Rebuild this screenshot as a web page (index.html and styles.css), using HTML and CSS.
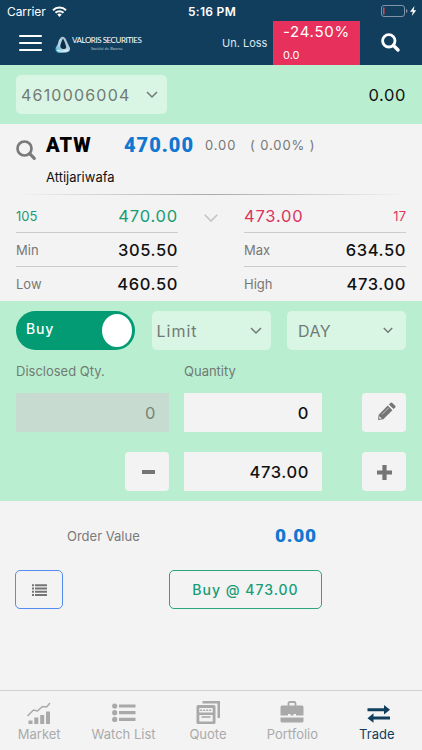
FILE: index.html
```html
<!DOCTYPE html>
<html lang="en">
<head>
    <meta charset="UTF-8">
    <meta name="viewport" content="width=device-width, initial-scale=1.0">
    <title>Trade</title>
    <link rel="stylesheet" href="styles.css">
</head>
<body>
    <div class="statusbar">
        <div class="carrier">
            <span>Carrier</span>
            <svg width="15" height="11" viewBox="0 0 15 11"><g fill="none" stroke="#fff" stroke-width="2"><path d="M1 4.2a9.3 9.3 0 0 1 13 0"/><path d="M3.5 6.8a5.7 5.7 0 0 1 8 0"/></g><path d="M5.3 8.6a3.2 3.2 0 0 1 4.4 0L7.5 11z" fill="#fff"/></svg>
        </div>
        <span class="time">5:16 PM</span>
        <div class="battery">
            <svg width="36" height="12" viewBox="0 0 36 12"><rect x=".5" y=".5" width="23" height="11" rx="2.5" fill="none" stroke="#8295a8"/><path d="M2 2.500h1.500v7H2z" fill="#f0444a"/><path d="M25 4v4q1.500-.5 1.500-2T25 4z" fill="#8295a8"/><path d="M33.500 1L29 6.800h2.800L30.800 11l4.500-5.800h-2.700z" fill="#fff"/></svg>
        </div>
    </div>

    <div class="header">
        <div class="menu"><i></i><i></i><i></i></div>
        <div class="logo">
            <svg width="16" height="18" viewBox="0 0 16 18">
                <defs>
                    <linearGradient id="drop" x1="0" y1="1" x2="1" y2="0"><stop offset="0" stop-color="#2ba3c8"/><stop offset=".4" stop-color="#b9dbe8"/><stop offset="1" stop-color="#a9b5bf"/></linearGradient>
                </defs>
                <path d="M5.500 2Q8-.5 10.500 2.500Q12 6 15 12Q15.500 16 11 16.500L4 17Q-.5 16 .8 11.500Q3.500 8 3.800 4.500Q4.200 3 5.500 2z" fill="url(#drop)"/>
                <path d="M8 2.500Q10 6 11 10Q12 13.500 8 13Q4.500 12.500 5.500 8.500Q6.500 5 8 2.500z" fill="#0b2d49"/>
                <path d="M2 14Q6 16.500 13.500 14" fill="none" stroke="#eef6fa" stroke-width="1.200"/>
            </svg>
            <div class="brand">
                <span class="brand-name">VALORIS SECURITIES</span>
                <span class="brand-sub">Société de Bourse</span>
            </div>
        </div>
        <span class="unloss">Un. Loss</span>
        <div class="loss">
            <span class="loss-pct">-24.50%</span>
            <span class="loss-val">0.0</span>
        </div>
        <svg class="search" width="20" height="20" viewBox="0 0 20 20" fill="none" stroke="#fff"><circle cx="7.800" cy="7.800" r="6.200" stroke-width="2.800"/><path d="M12.500 12.500l4.500 4.500" stroke-width="3.400" stroke-linecap="round"/></svg>
    </div>

    <div class="account">
        <div class="select account-no">
            <span>4610006004</span>
            <svg width="12" height="8" viewBox="0 0 12 8"><path d="M1 1l5 5 5-5"/></svg>
        </div>
        <span class="balance">0.00</span>
    </div>

    <div class="quote">
        <div class="symbol">
            <svg width="21" height="21" viewBox="0 0 21 21" fill="none" stroke="#7a7a7a"><circle cx="8.500" cy="8.500" r="7" stroke-width="2.700"/><path d="M13.700 13.700l4.600 4.600" stroke-width="3.200" stroke-linecap="round"/></svg>
            <span class="ticker">ATW</span>
            <span class="last">470.00</span>
            <span class="change">0.00</span>
            <span class="change-pct">( 0.00% )</span>
        </div>
        <div class="company">Attijariwafa</div>
        <div class="divider"></div>
        <div class="depth">
            <div class="side">
                <div class="row bid"><span>105</span><b>470.00</b></div>
                <div class="row"><span>Min</span><b>305.50</b></div>
                <div class="row"><span>Low</span><b>460.50</b></div>
            </div>
            <svg class="expand" width="14" height="8" viewBox="0 0 14 8"><path d="M.7.8L7 7 13.300.8" fill="none" stroke="#c3c3c3" stroke-width="1.600"/></svg>
            <div class="side">
                <div class="row ask"><b>473.00</b><span>17</span></div>
                <div class="row"><span>Max</span><b>634.50</b></div>
                <div class="row"><span>High</span><b>473.00</b></div>
            </div>
        </div>
    </div>

    <div class="order">
        <div class="options">
            <div class="toggle"><span>Buy</span><i></i></div>
            <div class="select limit">
                <span>Limit</span>
                <svg width="12" height="8" viewBox="0 0 12 8"><path d="M1 1l5 5 5-5"/></svg>
            </div>
            <div class="select day">
                <span>DAY</span>
                <svg width="10" height="7" viewBox="0 0 10 7"><path d="M.8 1L5 5.200 9.200 1"/></svg>
            </div>
        </div>
        <div class="labels"><span>Disclosed Qty.</span><span>Quantity</span></div>
        <div class="fields">
            <div class="field disabled">0</div>
            <div class="field">0</div>
            <div class="btn edit">
                <svg width="19" height="19" viewBox="0 0 19 19" fill="#757575"><path d="M1 18l.7-5.300L10.800 3.600l4.600 4.600L6.300 17.300z"/><path d="M11.900 2.500L13.700.8q.8-.6 1.600.1l2.900 2.900q.7.8 0 1.600l-1.700 1.700z"/><path d="M5 12.500l6.700-6.700" stroke="#f3f3f3" stroke-width=".6"/><path d="M2.500 14.300l2.200 2.200-2.100.3-.5-.5z" fill="#f3f3f3"/></svg>
            </div>
            <div class="btn minus">
                <svg width="13" height="4" viewBox="0 0 13 4"><rect width="13" height="4" fill="#757575"/></svg>
            </div>
            <div class="field">473.00</div>
            <div class="btn plus">
                <svg width="15" height="15" viewBox="0 0 15 15"><path d="M7.500 0v15M0 7.500h15" stroke="#757575" stroke-width="4.200"/></svg>
            </div>
        </div>
    </div>

    <div class="summary">
        <span class="value-label">Order Value</span>
        <span class="value">0.00</span>
    </div>
    <div class="actions">
        <div class="list-btn">
            <svg width="15" height="12" viewBox="0 0 15 12" stroke="#757575" stroke-width="2"><path d="M0 1.300h2M0 4.500h2M0 7.700h2M0 10.900h2M3 1.300h12M3 4.500h12M3 7.700h12M3 10.900h12"/></svg>
        </div>
        <div class="buy-btn">Buy @ 473.00</div>
    </div>

    <div class="tabs">
        <div class="tab">
            <svg width="26" height="24" viewBox="0 0 26 24"><path d="M2.500 19.500h4V23h-4zM8.300 16.500h4V23h-4zM14.200 14h4v9h-4zM20 10.500h4V23h-4z"/><path d="M1.500 15L7.500 9l4 1 5-4.500 4 .5 3.500-4" fill="none" stroke="#a9a9a9" stroke-width="1.500"/></svg>
            <span>Market</span>
        </div>
        <div class="tab">
            <svg width="26" height="24" viewBox="0 0 26 24"><circle cx="3.700" cy="5" r="2.600"/><circle cx="3.700" cy="11.700" r="2.600"/><circle cx="3.700" cy="18.400" r="2.600"/><path d="M8 3.400h16.500v3.200H8zM8 10.100h16.500v3.200H8zM8 16.800h16.500V20H8z"/></svg>
            <span>Watch List</span>
        </div>
        <div class="tab">
            <svg width="26" height="24" viewBox="0 0 26 24"><path d="M7.500 0H25V17H22.500V2.600H7.500z"/><path fill-rule="evenodd" d="M3 4H19Q20.500 4 20.500 5.500V21.500Q20.500 23 19 23H3Q1.500 23 1.500 21.500V5.500Q1.500 4 3 4zM4.300 7V11.500H17.700V7zM4.300 14V20.500H17.700V14z"/><path d="M5.200 9.300h11.500" fill="none" stroke="#a9a9a9" stroke-width="1.500" stroke-dasharray="2 1"/><path d="M6.500 15.200h9v1.600h-9z"/></svg>
            <span>Quote</span>
        </div>
        <div class="tab">
            <svg width="26" height="24" viewBox="0 0 26 24"><path d="M9.500 5V2.500Q9.500 1 11 1h4q1.500 0 1.500 1.500V5" fill="none" stroke="#a9a9a9" stroke-width="1.800"/><path d="M3 4.500h20q1.500 0 1.500 1.500v8.500H17V13h-2.500v1.500h-3V13H9v1.500H1.500V6Q1.500 4.500 3 4.500zM1.500 16.500h23V20q0 1.500-1.500 1.500H3q-1.500 0-1.500-1.500z"/></svg>
            <span>Portfolio</span>
        </div>
        <div class="tab active">
            <svg width="26" height="24" viewBox="0 0 26 24"><path d="M3.500 7.300h16.500V4l6 4.800-6 4.700v-3.200H3.500zM26 15.600H9.500v-3.300l-6 4.900 6 4.600v-3.200H26z"/></svg>
            <span>Trade</span>
        </div>
    </div>
</body>
</html>
```
FILE: styles.css
```css
* {
    box-sizing: border-box;
}
body {
    margin: 0;
    height: 750px;
    display: flex;
    flex-direction: column;
    overflow: hidden;
    background: #f3f3f3;
    color: #111;
    font-family: Inter, "Liberation Sans", sans-serif;
    font-size: 13px;
}
svg {
    display: block;
    flex: none;
}
.statusbar {
    height: 21px;
    display: grid;
    grid-template-columns: 1fr auto 1fr;
    align-items: center;
    padding: 1px 5px 0 7px;
    background: #123e5d;
    color: #fff;
    font-size: 12px;
}
.carrier {
    display: flex;
    align-items: center;
    gap: 6px;
    letter-spacing: -0.1px;
}
.time {
    font-weight: 600;
    letter-spacing: 0.3px;
}
.battery {
    display: flex;
    justify-content: flex-end;
}
.header {
    height: 44px;
    display: flex;
    align-items: center;
    background: #123e5d;
    color: #fff;
}
.menu {
    width: 23px;
    margin-left: 19px;
    display: flex;
    flex-direction: column;
    gap: 5px;
}
.menu i {
    height: 2px;
    border-radius: 1px;
    background: #fff;
}
.logo {
    width: 88px;
    margin-left: 13px;
    padding-top: 3px;
    display: flex;
    gap: 1px;
}
.brand {
    display: flex;
    flex-direction: column;
    align-items: center;
    font-family: Lato, sans-serif;
    white-space: nowrap;
}
.brand-name {
    font-size: 8px;
    line-height: 9px;
    letter-spacing: -0.45px;
}
.brand-sub {
    font-size: 4px;
    line-height: 8px;
    color: #b9c6d1;
}
.unloss {
    width: 48px;
    margin-left: 79px;
    font-size: 11px;
    white-space: nowrap;
    color: #dfe6ec;
}
.loss {
    width: 87px;
    height: 44px;
    margin-left: 3px;
    padding-left: 10px;
    display: flex;
    flex-direction: column;
    background: #e8305c;
}
.loss-pct {
    font-size: 15px;
    line-height: 21px;
    letter-spacing: 0.7px;
}
.loss-val {
    margin-top: 4px;
    font-size: 11px;
    line-height: 18px;
}
.search {
    margin-left: 21px;
}
.account {
    height: 59px;
    padding: 0 16px;
    display: flex;
    align-items: center;
    justify-content: space-between;
    background: #b9efd0;
}
.select {
    height: 39px;
    display: flex;
    align-items: center;
    justify-content: space-between;
    border-radius: 5px;
    background: #d9f5e4;
    color: #727a75;
    font-size: 16px;
    letter-spacing: 1px;
}
.select svg {
    fill: none;
    stroke: #727a75;
    stroke-width: 1.5;
}
.account-no {
    width: 151px;
    padding: 0 9px 0 5px;
    letter-spacing: 1.2px;
}
.balance {
    font-size: 16.5px;
    letter-spacing: 0.6px;
}
.quote {
    height: 177px;
    padding: 9px 16px 0;
}
.symbol {
    height: 24px;
    display: flex;
    align-items: center;
}
.symbol svg {
    margin-top: 10px;
}
.ticker, .last, .value {
    font-family: Roboto, sans-serif;
    font-size: 20px;
    font-weight: 900;
}
.ticker {
    width: 78px;
    margin-left: 9px;
    letter-spacing: 1px;
    color: #000;
}
.last, .value {
    color: #1177d1;
    letter-spacing: 1px;
}
.last {
    width: 81px;
}
.change {
    width: 45px;
    color: #777;
    letter-spacing: 0.9px;
}
.change-pct {
    color: #777;
    letter-spacing: 0.9px;
}
.company {
    margin: 12px 0 0 30px;
    line-height: 16px;
}
.divider {
    height: 1px;
    margin-top: 9px;
    background: linear-gradient(to right, transparent, #aaa 50%, transparent);
}
.depth {
    margin-top: 4px;
    display: flex;
    justify-content: space-between;
}
.side {
    width: 162px;
}
.row {
    height: 34px;
    display: flex;
    align-items: center;
    justify-content: space-between;
    border-bottom: 1px solid #ccc;
    color: #777;
}
.row:last-child {
    border-bottom: none;
}
.row b {
    color: #111;
    font-size: 16.5px;
    font-weight: 500;
    letter-spacing: 0.6px;
}
.row.bid, .row.bid b {
    color: #179c75;
    font-weight: 400;
}
.row.ask, .row.ask b {
    color: #dc3560;
    font-weight: 400;
}
.row.bid b, .row.ask b {
    letter-spacing: 0.8px;
}
.expand {
    margin-top: 15px;
}
.order {
    height: 200px;
    padding: 10px 16px 0;
    background: #b9efd0;
}
.options {
    display: flex;
    justify-content: space-between;
}
.toggle {
    width: 119px;
    height: 39px;
    padding: 0 3px 0 10px;
    display: flex;
    align-items: center;
    justify-content: space-between;
    border-radius: 20px;
    background: #039b73;
    color: #fff;
    font-size: 14px;
    font-weight: 500;
    letter-spacing: 0.8px;
}
.toggle span {
    padding-bottom: 4px;
}
.toggle i {
    width: 30px;
    height: 33px;
    border-radius: 50%;
    background: #fff;
}
.limit {
    width: 119px;
    padding: 0 9px 0 5px;
}
.day {
    width: 119px;
    padding: 0 13px 0 11px;
    letter-spacing: 0.5px;
}
.labels {
    display: grid;
    grid-template-columns: 168px auto;
    margin-top: 12px;
    line-height: 18px;
    color: #727a75;
}
.fields {
    display: grid;
    grid-template-columns: 153px 138px 1fr;
    gap: 20px 15px;
    margin-top: 13px;
}
.field {
    height: 39px;
    padding-right: 13px;
    border-radius: 1px;
    background: #f3f3f3;
    font-size: 16.5px;
    font-weight: 500;
    letter-spacing: 0.6px;
    line-height: 40px;
    text-align: right;
}
.field.disabled {
    background: #c8dbd0;
    color: #75837a;
    font-weight: 400;
}
.btn {
    width: 44px;
    height: 39px;
    display: flex;
    align-items: center;
    justify-content: center;
    justify-self: end;
    border-radius: 4px;
    background: #f3f3f3;
}
.edit {
    padding: 0 0 2px 5px;
}
.minus {
    padding-left: 3px;
    padding-top: 1px;
}
.plus {
    padding-left: 1px;
    padding-top: 1px;
}
.summary {
    height: 69px;
    padding-left: 67px;
    display: flex;
    align-items: center;
}
.value-label {
    width: 208px;
    padding-top: 1px;
    color: #7a7a7a;
}
.summary .value {
    font-size: 19px;
    letter-spacing: 0.7px;
}
.actions {
    display: flex;
    gap: 106px;
    padding-left: 15px;
}
.list-btn, .buy-btn {
    height: 39px;
    display: flex;
    align-items: center;
    justify-content: center;
    border-radius: 5px;
}
.list-btn {
    width: 48px;
    border: 1px solid #548cf0;
}
.buy-btn {
    width: 153px;
    border: 1px solid #2aa580;
    color: #179c75;
    font-size: 14px;
    font-weight: 500;
    letter-spacing: 1px;
}
.tabs {
    height: 60px;
    margin: auto 0 0 -3px;
    padding-right: 3px;
    display: grid;
    grid-template-columns: repeat(5, 1fr);
    border-top: 1px solid #d0d0d0;
}
.tab {
    display: flex;
    flex-direction: column;
    align-items: center;
    padding-top: 10px;
    color: #aaa;
    font-size: 13px;
    line-height: 18px;
}
.tab svg {
    fill: #a9a9a9;
}
.tab.active {
    color: #123e5d;
}
.tab.active svg {
    fill: #123e5d;
}
```
